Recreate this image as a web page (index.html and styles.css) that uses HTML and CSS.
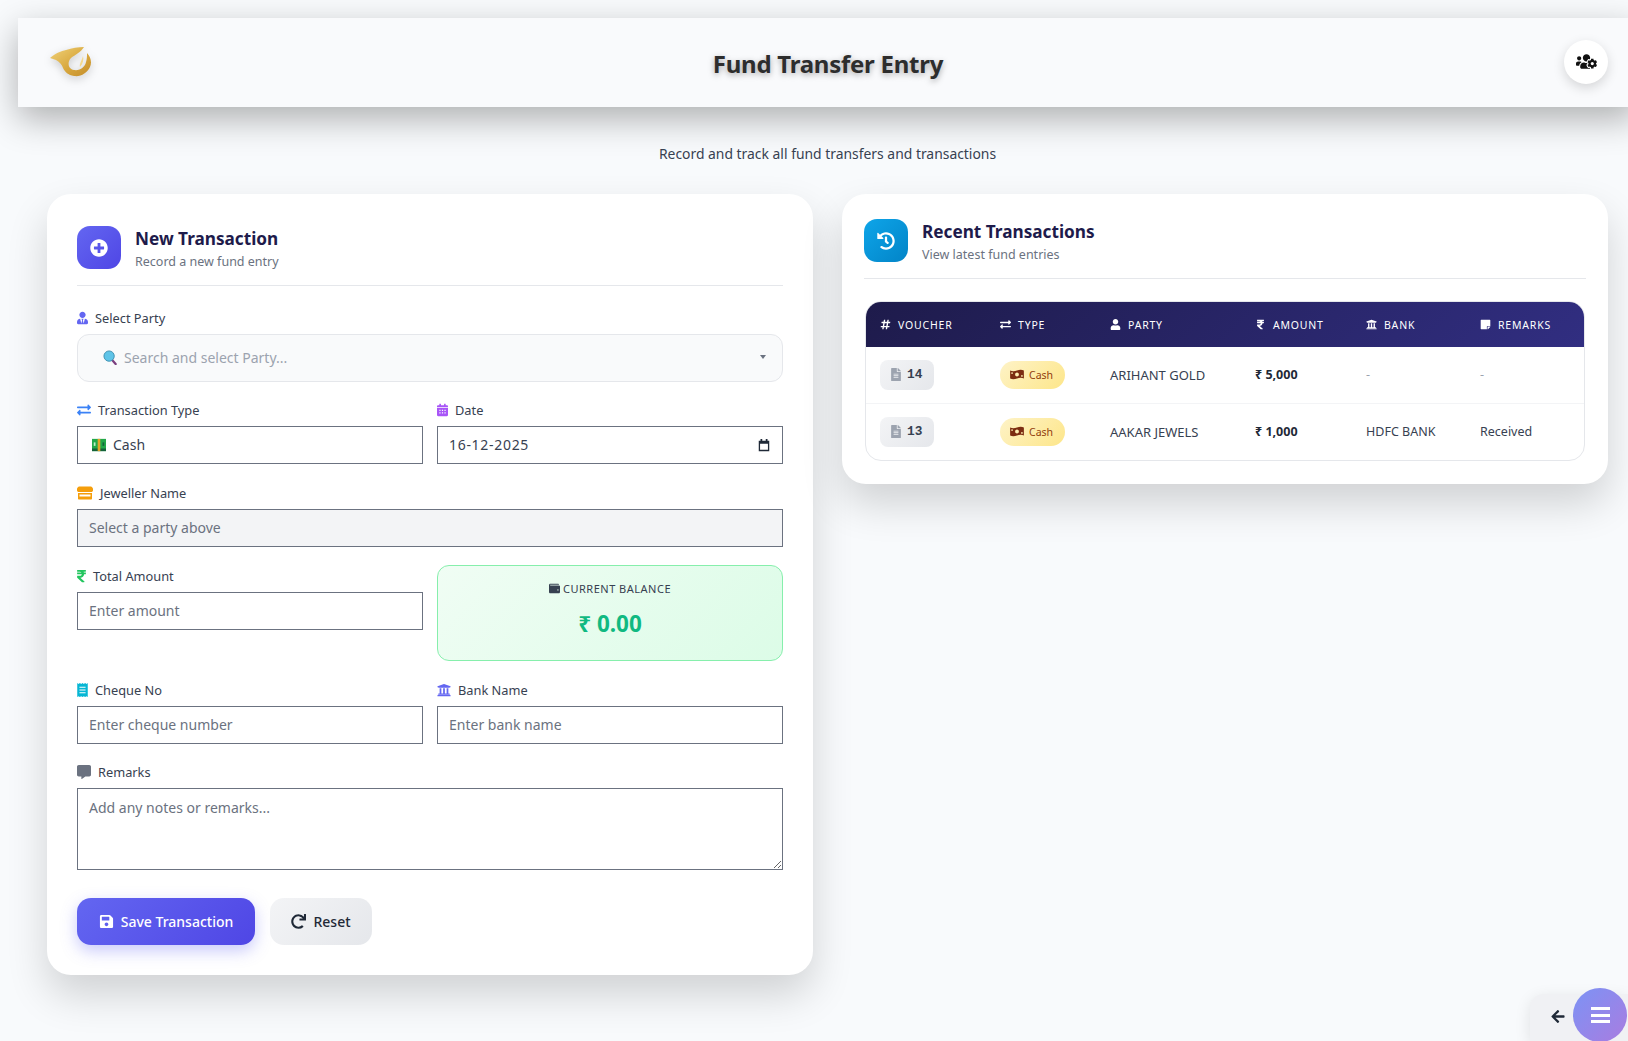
FILE: index.html
```html
<!DOCTYPE html>
<html lang="en">
<head>
    <meta charset="UTF-8">
    <meta name="viewport" content="width=device-width, initial-scale=1.0">
    <title>Fund Transfer Entry</title>
    <link rel="stylesheet" href="styles.css">
</head>
<body>
    <!-- icon sprite -->
    <svg class="sprite" xmlns="http://www.w3.org/2000/svg">
        <symbol id="i-plus" viewBox="0 0 512 512"><path d="M256 8C119 8 8 119 8 256s111 248 248 248 248-111 248-248S393 8 256 8zm144 276c0 6.6-5.4 12-12 12h-92v92c0 6.6-5.4 12-12 12h-56c-6.6 0-12-5.4-12-12v-92h-92c-6.6 0-12-5.4-12-12v-56c0-6.6 5.4-12 12-12h92v-92c0-6.6 5.4-12 12-12h56c6.6 0 12 5.4 12 12v92h92c6.6 0 12 5.4 12 12v56z"/></symbol>
        <symbol id="i-history" viewBox="0 0 512 512"><path d="M504 255.531c.253 136.64-111.18 248.372-247.82 248.468-59.015.042-113.223-20.53-155.822-54.911-11.077-8.94-11.905-25.541-1.839-35.607l11.267-11.267c8.609-8.609 22.353-9.551 31.891-1.984C173.062 425.135 212.781 440 256 440c101.705 0 184-82.311 184-184 0-101.705-82.311-184-184-184-48.814 0-93.149 18.969-126.068 49.932l50.754 50.754c10.08 10.08 2.941 27.314-11.313 27.314H24c-8.837 0-16-7.163-16-16V38.627c0-14.254 17.234-21.393 27.314-11.314l49.372 49.372C129.209 34.136 189.552 8 256 8c136.81 0 247.747 110.78 248 247.531zm-180.912 78.784l9.823-12.63c8.138-10.463 6.253-25.542-4.21-33.679L288 256.349V152c0-13.255-10.745-24-24-24h-16c-13.255 0-24 10.745-24 24v135.651l65.409 50.874c10.463 8.137 25.541 6.253 33.679-4.21z"/></symbol>
        <symbol id="i-hash" viewBox="0 0 448 512"><path d="M440.667 182.109l7.143-40c1.313-7.355-4.342-14.109-11.813-14.109h-74.81l14.623-81.891C377.123 38.754 371.468 32 363.997 32h-40.632a12 12 0 0 0-11.813 9.891L296.175 128H197.54l14.623-81.891C213.477 38.754 207.822 32 200.35 32h-40.632a12 12 0 0 0-11.813 9.891L132.528 128H53.432a12 12 0 0 0-11.813 9.891l-7.143 40C33.163 185.246 38.818 192 46.289 192h74.81L98.242 320H19.146a12 12 0 0 0-11.813 9.891l-7.143 40C-1.123 377.246 4.532 384 12.003 384h74.81L72.19 465.891C70.877 473.246 76.532 480 84.003 480h40.632a12 12 0 0 0 11.813-9.891L151.826 384h98.634l-14.623 81.891C234.523 473.246 240.178 480 247.65 480h40.632a12 12 0 0 0 11.813-9.891L315.472 384h79.096a12 12 0 0 0 11.813-9.891l7.143-40c1.313-7.355-4.342-14.109-11.813-14.109h-74.81l22.857-128h79.096a12 12 0 0 0 11.813-9.891zM261.889 320h-98.634l22.857-128h98.634l-22.857 128z"/></symbol>
        <symbol id="i-exchange" viewBox="0 0 512 512"><path d="M0 168v-16c0-13.255 10.745-24 24-24h360V80c0-21.367 25.899-32.042 40.971-16.971l80 80c9.372 9.373 9.372 24.569 0 33.941l-80 80C409.956 271.982 384 261.456 384 240v-48H24c-13.255 0-24-10.745-24-24zm488 152H128v-48c0-21.314-25.862-32.08-40.971-16.971l-80 80c-9.372 9.373-9.372 24.569 0 33.941l80 80C102.057 463.997 128 453.437 128 432v-48h360c13.255 0 24-10.745 24-24v-16c0-13.255-10.745-24-24-24z"/></symbol>
        <symbol id="i-user" viewBox="0 0 448 512"><path d="M224 256c70.7 0 128-57.3 128-128S294.7 0 224 0 96 57.3 96 128s57.3 128 128 128zm89.6 32h-16.7c-22.2 10.2-46.9 16-72.9 16s-50.6-5.8-72.9-16h-16.7C60.2 288 0 348.2 0 422.4V464c0 26.5 21.5 48 48 48h352c26.5 0 48-21.5 48-48v-41.6c0-74.2-60.2-134.4-134.4-134.4z"/></symbol>
        <symbol id="i-user-tie" viewBox="0 0 448 512"><path d="M224 256c70.700 0 128-57.300 128-128S294.700 0 224 0 96 57.300 96 128s57.300 128 128 128zm95.800 32.600L272 480l-32-136 32-56h-96l32 56-32 136-47.800-191.400C56.900 292 0 350.300 0 422.400V464c0 26.500 21.500 48 48 48h352c26.500 0 48-21.500 48-48v-41.600c0-72.100-56.900-130.400-128.200-133.800z"/></symbol>
        <symbol id="i-rupee" viewBox="0 0 320 512"><path d="M308 96c6.627 0 12-5.373 12-12V44c0-6.627-5.373-12-12-12H12C5.373 32 0 37.373 0 44v44.748c0 6.627 5.373 12 12 12h85.28c27.308 0 48.261 9.958 60.97 27.252H12c-6.627 0-12 5.373-12 12v40c0 6.627 5.373 12 12 12h158.757c-6.217 36.086-32.961 58.632-74.757 58.632H12c-6.627 0-12 5.373-12 12v53.012c0 3.349 1.4 6.546 3.861 8.818l165.052 152.356a12.001 12.001 0 0 0 8.139 3.182h82.562c10.924 0 16.166-13.408 8.139-20.818L116.871 319.906c76.499-2.34 131.144-53.395 138.318-127.906H308c6.627 0 12-5.373 12-12v-40c0-6.627-5.373-12-12-12h-58.69c-3.486-11.541-8.28-22.246-14.252-32H308z"/></symbol>
        <symbol id="i-bank" viewBox="0 0 512 512"><path d="M496 128v16a8 8 0 0 1-8 8h-24v12c0 6.627-5.373 12-12 12H60c-6.627 0-12-5.373-12-12v-12H24a8 8 0 0 1-8-8v-16a8 8 0 0 1 4.941-7.392l232-88a7.996 7.996 0 0 1 6.118 0l232 88A8 8 0 0 1 496 128zm-24 304H40c-13.255 0-24 10.745-24 24v16a8 8 0 0 0 8 8h464a8 8 0 0 0 8-8v-16c0-13.255-10.745-24-24-24zM96 192v192H60c-6.627 0-12 5.373-12 12v20h416v-20c0-6.627-5.373-12-12-12h-36V192h-64v192h-64V192h-64v192h-64V192H96z"/></symbol>
        <symbol id="i-note" viewBox="0 0 448 512"><path d="M312 320h136V56c0-13.300-10.700-24-24-24H24C10.700 32 0 42.700 0 56v400c0 13.300 10.700 24 24 24h264V344c0-13.200 10.800-24 24-24zm129 55l-98 98c-4.500 4.500-10.600 7-17 7h-6V352h128v6.100c0 6.300-2.500 12.400-7 16.900z"/></symbol>
        <symbol id="i-file" viewBox="0 0 384 512"><path d="M224 136V0H24C10.700 0 0 10.700 0 24v464c0 13.300 10.700 24 24 24h336c13.300 0 24-10.700 24-24V160H248c-13.200 0-24-10.800-24-24zm64 236c0 6.600-5.400 12-12 12H108c-6.600 0-12-5.400-12-12v-8c0-6.600 5.400-12 12-12h168c6.600 0 12 5.400 12 12v8zm0-64c0 6.600-5.400 12-12 12H108c-6.600 0-12-5.400-12-12v-8c0-6.600 5.400-12 12-12h168c6.600 0 12 5.400 12 12v8zm0-72v8c0 6.600-5.400 12-12 12H108c-6.600 0-12-5.400-12-12v-8c0-6.600 5.400-12 12-12h168c6.600 0 12 5.400 12 12zm96-114.100v6.100H256V0h6.100c6.400 0 12.500 2.500 17 7l97.900 98c4.500 4.500 7 10.600 7 16.900z"/></symbol>
        <symbol id="i-save" viewBox="0 0 448 512"><path d="M433.941 129.941l-83.882-83.882A48 48 0 0 0 316.118 32H48C21.490 32 0 53.490 0 80v352c0 26.510 21.490 48 48 48h352c26.510 0 48-21.490 48-48V163.882a48 48 0 0 0-14.059-33.941zM224 416c-35.346 0-64-28.654-64-64 0-35.346 28.654-64 64-64s64 28.654 64 64c0 35.346-28.654 64-64 64zm96-304.520V212c0 6.627-5.373 12-12 12H76c-6.627 0-12-5.373-12-12V108c0-6.627 5.373-12 12-12h228.520c3.183 0 6.235 1.264 8.485 3.515l3.480 3.480A11.996 11.996 0 0 1 320 111.480z"/></symbol>
        <symbol id="i-redo" viewBox="0 0 512 512"><path d="M500.330 0h-47.410a12 12 0 0 0-12 12.570l4 82.760A247.420 247.420 0 0 0 256 8C119.340 8 7.900 119.530 8 256.190 8.100 393.070 119.100 504 256 504a247.100 247.100 0 0 0 166.180-63.910 12 12 0 0 0 .48-17.430l-34-34a12 12 0 0 0-16.380-.55A176 176 0 1 1 402.100 157.800l-101.530-4.870a12 12 0 0 0-12.570 12v47.410a12 12 0 0 0 12 12h200.330a12 12 0 0 0 12-12V12a12 12 0 0 0-12-12z"/></symbol>
        <symbol id="i-arrow" viewBox="0 0 448 512"><path d="M257.500 445.100l-22.200 22.200c-9.400 9.400-24.600 9.400-33.900 0L7 273c-9.400-9.400-9.400-24.600 0-33.900L201.400 44.700c9.400-9.400 24.600-9.400 33.900 0l22.200 22.200c9.500 9.500 9.300 25-.4 34.300L136.600 216H424c13.300 0 24 10.700 24 24v32c0 13.300-10.700 24-24 24H136.600l120.500 114.800c9.800 9.300 10 24.800.4 34.300z"/></symbol>
        <symbol id="i-comment" viewBox="0 0 512 512"><path d="M448 0H64C28.700 0 0 28.700 0 64v288c0 35.300 28.700 64 64 64h96v84c0 9.800 11.200 15.500 19.100 9.700L304 416h144c35.300 0 64-28.700 64-64V64c0-35.300-28.700-64-64-64z"/></symbol>
        <symbol id="i-calendar" viewBox="0 0 448 512"><path d="M0 176h448v288c0 26.500-21.500 48-48 48H48c-26.500 0-48-21.500-48-48zm96 72v48h48v-48zm104 0v48h48v-48zm104 0v48h48v-48zM96 352v48h48v-48zm104 0v48h48v-48zm104 0v48h48v-48zM48 64h48V16c0-8.800 7.200-16 16-16h32c8.800 0 16 7.200 16 16v48h128V16c0-8.800 7.200-16 16-16h32c8.800 0 16 7.200 16 16v48h48c26.500 0 48 21.500 48 48v32H0v-32c0-26.500 21.500-48 48-48z"/></symbol>
        <symbol id="i-store" viewBox="0 0 512 416"><path d="M80 0h352c28 0 56 18 72 50l8 26v42c0 32-26 58-58 58H58c-32 0-58-26-58-58V76l8-26C24 18 52 0 80 0zM32 208h448v176c0 18-14 32-32 32H64c-18 0-32-14-32-32zm48 48v64h352v-64z"/></symbol>
        <symbol id="i-receipt" viewBox="0 0 384 512"><path d="M0 0l48 32L96 0l48 32 48-32 48 32 48-32 48 32 48-32v512l-48-32-48 32-48-32-48 32-48-32-48 32-48-32-48 32zm80 136v40h224v-40zm0 100v40h224v-40zm0 100v40h224v-40z"/></symbol>
        <symbol id="i-wallet" viewBox="0 0 512 512"><path d="M64 32h368c18 0 32 14 32 32v16H64c-9 0-16 7-16 16s7 16 16 16h384c35 0 64 14 64 48v256c0 35-29 64-64 64H64c-35 0-64-29-64-64V96c0-35 29-64 64-64zm352 256c-18 0-32 14-32 32s14 32 32 32 32-14 32-32-14-32-32-32z"/></symbol>
        <symbol id="i-money" viewBox="0 0 640 512"><path fill-rule="evenodd" d="M0 70C100 120 210 110 320 70S540 20 640 70V442C540 392 430 402 320 442S100 492 0 442zM320 166a90 90 0 1 0 0 180 90 90 0 0 0 0-180zM90 150a40 40 0 1 0 0 80 40 40 0 0 0 0-80zM550 282a40 40 0 1 0 0 80 40 40 0 0 0 0-80z"/></symbol>
        <symbol id="i-users-cog" viewBox="0 0 640 512"><path d="M610.5 341.3c2.6-14.1 2.6-28.5 0-42.6l25.8-14.9c3-1.7 4.3-5.2 3.3-8.5-6.7-21.6-18.2-41.2-33.2-57.4-2.3-2.5-6-3.1-9-1.4l-25.8 14.9c-10.9-9.3-23.4-16.5-36.9-21.3v-29.8c0-3.4-2.4-6.4-5.7-7.1-22.3-5-45-4.8-66.2 0-3.3.7-5.7 3.7-5.7 7.1v29.8c-13.5 4.8-26 12-36.9 21.3l-25.8-14.9c-2.9-1.7-6.7-1.1-9 1.4-15 16.2-26.5 35.8-33.2 57.4-1 3.3.4 6.8 3.3 8.5l25.8 14.9c-2.6 14.1-2.6 28.5 0 42.6l-25.8 14.9c-3 1.7-4.3 5.2-3.3 8.5 6.7 21.6 18.2 41.1 33.2 57.4 2.3 2.5 6 3.1 9 1.4l25.8-14.9c10.9 9.3 23.4 16.5 36.9 21.3v29.8c0 3.4 2.4 6.4 5.7 7.1 22.3 5 45 4.8 66.2 0 3.3-.7 5.7-3.7 5.7-7.1v-29.8c13.5-4.8 26-12 36.9-21.3l25.8 14.9c2.9 1.7 6.7 1.1 9-1.4 15-16.2 26.5-35.8 33.2-57.4 1-3.3-.4-6.8-3.3-8.5l-25.8-14.9zM496 368.5c-26.8 0-48.5-21.8-48.5-48.5s21.8-48.5 48.5-48.5 48.5 21.8 48.5 48.5-21.7 48.5-48.5 48.5zM96 224c35.3 0 64-28.7 64-64s-28.7-64-64-64-64 28.7-64 64 28.7 64 64 64zm224 32c1.9 0 3.7-.5 5.6-.6 8.3-21.7 20.5-42.1 36.3-59.2 7.4-8 17.9-12.6 28.9-12.6 6.9 0 13.7 1.8 19.6 5.3l7.9 4.6c.8-.5 1.6-.9 2.4-1.4 7-14.6 11.2-30.8 11.2-48 0-61.9-50.1-112-112-112S208 82.100 208 144c0 61.900 50.100 112 112 112zm105.200 194.500c-2.300-1.200-4.600-2.600-6.800-3.900-8.200 4.800-15.300 9.800-27.500 9.800-10.900 0-21.400-4.600-28.900-12.600-18.300-19.800-32.300-43.900-40.200-69.600-10.700-34.500 24.900-49.700 25.800-50.300-.1-2.600-.1-5.200 0-7.800l-7.900-4.600c-3.800-2.200-7-5-9.800-8.100-3.300.2-6.500.6-9.800.6-24.600 0-47.600-6-68.500-16h-8.300C179.600 288 128 339.600 128 403.200V432c0 26.500 21.500 48 48 48h255.400c-3.700-6-6.200-12.800-6.200-20.300v-9.200zM173.100 274.600C161.500 263.100 145.600 256 128 256H64c-35.300 0-64 28.700-64 64v32c0 17.700 14.300 32 32 32h65.900c6.300-47.400 34.900-87.300 75.200-109.400z"/></symbol>
    </svg>

    <header class="top-bar">
        <svg class="logo" viewBox="0 0 42 34" xmlns="http://www.w3.org/2000/svg">
            <defs>
                <linearGradient id="goldGrad" x1="0" y1="0" x2="1" y2="1">
                    <stop offset="0" stop-color="#f0d27a"/>
                    <stop offset="0.55" stop-color="#d9a93f"/>
                    <stop offset="1" stop-color="#c48d2a"/>
                </linearGradient>
            </defs>
            <path fill="url(#goldGrad)" d="M0 13 C6 8 11 6 16 5 C22 3 28 2 34 2 C31 7 25 10 21 13 C17 17 18 24 24 25 C30 26 35 22 36 17 C37 14 37 11 37 8 C41 12 42 18 40 22 C37 28 31 32 24 31 C18 30 15 27 13 23 C12 20 10 17 6 15 C4 14 2 14 0 13 Z"/>
            <path fill="#f3d98e" d="M33 11 C34 14 33 19 30 22 C29 19 32 15 33 11 Z"/>
        </svg>
        <h1 class="page-title">Fund Transfer Entry</h1>
        <button class="profile-btn" type="button" aria-label="Users">
            <svg class="ic"><use href="#i-users-cog"/></svg>
        </button>
    </header>

    <p class="page-sub">Record and track all fund transfers and transactions</p>

    <main class="columns">
        <section class="card form-card">
            <div class="card-head">
                <div class="head-icon violet"><svg class="ic"><use href="#i-plus"/></svg></div>
                <div class="head-text">
                    <h2>New Transaction</h2>
                    <p>Record a new fund entry</p>
                </div>
            </div>

            <form class="form-stack">
                <div class="field">
                    <label class="lbl"><svg class="ic c-indigo w-11"><use href="#i-user-tie"/></svg>Select Party</label>
                    <div class="party-select">
                        <svg class="emoji-search" viewBox="0 0 16 16" xmlns="http://www.w3.org/2000/svg">
                            <path d="M9.500 10.500 L13.500 15" stroke="#7b3f7f" stroke-width="2.400" stroke-linecap="round"/>
                            <circle cx="6.500" cy="6.500" r="5.500" fill="#5fc4e8" stroke="#3d8fb0" stroke-width="1"/>
                        </svg>
                        <span class="party-ph">Search and select Party...</span>
                        <span class="caret"></span>
                    </div>
                </div>

                <div class="two-col">
                    <div class="field">
                        <label class="lbl"><svg class="ic c-blue w-14"><use href="#i-exchange"/></svg>Transaction Type</label>
                        <div class="ctrl">
                            <svg class="emoji-cash" viewBox="0 0 16 16" xmlns="http://www.w3.org/2000/svg">
                                <rect y="1" width="16" height="14" fill="#22a84a"/>
                                <rect y="12" width="16" height="3" fill="#14633a"/>
                                <rect x="6.500" y="1" width="3" height="14" fill="#e3a52a"/>
                                <rect x="2" y="5" width="2" height="4" fill="#bff0c8"/>
                                <rect x="12" y="5" width="2" height="4" fill="#14633a"/>
                            </svg>
                            <span>Cash</span>
                        </div>
                    </div>
                    <div class="field">
                        <label class="lbl"><svg class="ic c-purple w-11"><use href="#i-calendar"/></svg>Date</label>
                        <div class="ctrl date-ctrl">
                            <span class="date-val">16-12-2025</span>
                            <svg class="date-ic" viewBox="0 0 16 16" xmlns="http://www.w3.org/2000/svg">
                                <path d="M4 1h2v2h4V1h2v2h2v12H2V3h2zM3.500 6.500v7h9v-7z"/>
                            </svg>
                        </div>
                    </div>
                </div>

                <div class="field">
                    <label class="lbl"><svg class="ic c-amber w-16"><use href="#i-store"/></svg>Jeweller Name</label>
                    <input class="inp inp-off" type="text" placeholder="Select a party above" readonly>
                </div>

                <div class="two-col">
                    <div class="field amount-field">
                        <label class="lbl"><svg class="ic c-green w-9"><use href="#i-rupee"/></svg>Total Amount</label>
                        <input class="inp" type="text" placeholder="Enter amount">
                    </div>
                    <div class="balance-box">
                        <div class="bal-label"><svg class="ic"><use href="#i-wallet"/></svg>CURRENT BALANCE</div>
                        <div class="bal-value">₹ 0.00</div>
                    </div>
                </div>

                <div class="two-col">
                    <div class="field">
                        <label class="lbl"><svg class="ic c-cyan w-11"><use href="#i-receipt"/></svg>Cheque No</label>
                        <input class="inp" type="text" placeholder="Enter cheque number">
                    </div>
                    <div class="field">
                        <label class="lbl"><svg class="ic c-indigo w-14"><use href="#i-bank"/></svg>Bank Name</label>
                        <input class="inp" type="text" placeholder="Enter bank name">
                    </div>
                </div>

                <div class="field">
                    <label class="lbl"><svg class="ic c-gray w-14"><use href="#i-comment"/></svg>Remarks</label>
                    <textarea class="inp remarks" placeholder="Add any notes or remarks..."></textarea>
                </div>

                <div class="btn-row">
                    <button class="btn btn-save" type="button"><svg class="ic"><use href="#i-save"/></svg>Save Transaction</button>
                    <button class="btn btn-reset" type="button"><svg class="ic"><use href="#i-redo"/></svg>Reset</button>
                </div>
            </form>
        </section>

        <section class="card list-card">
            <div class="card-head">
                <div class="head-icon sky"><svg class="ic"><use href="#i-history"/></svg></div>
                <div class="head-text">
                    <h2>Recent Transactions</h2>
                    <p>View latest fund entries</p>
                </div>
            </div>

            <div class="table-wrap">
                <table class="tx-table">
                    <colgroup>
                        <col class="col-voucher">
                        <col class="col-type">
                        <col class="col-party">
                        <col class="col-amount">
                        <col class="col-bank">
                        <col class="col-remarks">
                    </colgroup>
                    <thead>
                        <tr>
                            <th><svg class="ic"><use href="#i-hash"/></svg>VOUCHER</th>
                            <th><svg class="ic"><use href="#i-exchange"/></svg>TYPE</th>
                            <th><svg class="ic"><use href="#i-user"/></svg>PARTY</th>
                            <th><svg class="ic"><use href="#i-rupee"/></svg>AMOUNT</th>
                            <th><svg class="ic"><use href="#i-bank"/></svg>BANK</th>
                            <th><svg class="ic"><use href="#i-note"/></svg>REMARKS</th>
                        </tr>
                    </thead>
                    <tbody>
                        <tr>
                            <td><span class="voucher"><svg class="ic"><use href="#i-file"/></svg>14</span></td>
                            <td><span class="type-pill"><svg class="ic"><use href="#i-money"/></svg>Cash</span></td>
                            <td class="party">ARIHANT GOLD</td>
                            <td class="amount">₹ 5,000</td>
                            <td class="muted">-</td>
                            <td class="muted">-</td>
                        </tr>
                        <tr>
                            <td><span class="voucher"><svg class="ic"><use href="#i-file"/></svg>13</span></td>
                            <td><span class="type-pill"><svg class="ic"><use href="#i-money"/></svg>Cash</span></td>
                            <td class="party">AAKAR JEWELS</td>
                            <td class="amount">₹ 1,000</td>
                            <td>HDFC BANK</td>
                            <td>Received</td>
                        </tr>
                    </tbody>
                </table>
            </div>
        </section>
    </main>

    <div class="back-tab"><svg class="ic"><use href="#i-arrow"/></svg><span>Back</span></div>
    <button class="fab" type="button" aria-label="Menu"><span></span><span></span><span></span></button>
</body>
</html>
```

FILE: styles.css
```css
* {
    box-sizing: border-box;
}

html, body {
    height: 1041px;
    overflow: hidden;
}

body {
    margin: 0;
    padding: 18px 0 0 18px;
    width: 1628px;
    position: relative;
    font-family: "Noto Sans", "Open Sans", sans-serif;
    background-color: #f8fafc;
    color: #1f2937;
}

.sprite {
    display: none;
}

.ic {
    fill: currentColor;
    flex: none;
}

/* top bar */
.top-bar {
    width: 1619px;
    height: 89px;
    padding: 0 29px 0 32px;
    display: flex;
    align-items: center;
    justify-content: space-between;
    background-color: #f9fafc;
    box-shadow: 0 12px 35px rgba(0, 0, 0, 0.3);
}

.logo {
    width: 42px;
    height: 34px;
    margin-bottom: 2px;
    filter: drop-shadow(0 3px 4px rgba(0, 0, 0, 0.18));
}

.page-title {
    margin: 2px 0 0;
    font-size: 24px;
    font-weight: 700;
    letter-spacing: -0.25px;
    color: #2d2d2d;
    text-shadow: 0 2px 6px rgba(0, 0, 0, 0.35);
}

.profile-btn {
    width: 44px;
    height: 44px;
    margin-top: -2px;
    padding: 0;
    border: none;
    border-radius: 50%;
    display: flex;
    align-items: center;
    justify-content: center;
    background-color: #ffffff;
    color: #111111;
    box-shadow: 0 4px 12px rgba(0, 0, 0, 0.15);
}

.profile-btn .ic {
    width: 21px;
    height: 17px;
}

.page-sub {
    width: 1619px;
    margin: 37px 0 0 0;
    height: 20px;
    line-height: 20px;
    text-align: center;
    font-size: 13.9px;
    color: #374151;
}

/* layout */
.columns {
    display: grid;
    grid-template-columns: 766px 766px;
    gap: 29px;
    align-items: start;
    margin: 30px 0 0 29px;
}

.card {
    background-color: #ffffff;
    border-radius: 24px;
    box-shadow: 0 20px 40px rgba(0, 0, 0, 0.16);
}

.form-card {
    padding: 32px 30px 30px;
    height: 781px;
}

.list-card {
    padding: 25px 22px 24px;
    height: 290px;
}

.card-head {
    display: flex;
    align-items: flex-start;
    gap: 14px;
    height: 60px;
    border-bottom: 1px solid #e5e7eb;
}

.head-icon {
    width: 44px;
    height: 43px;
    border-radius: 13px;
    display: flex;
    align-items: center;
    justify-content: center;
    color: #ffffff;
}

.head-icon .ic {
    width: 18px;
    height: 18px;
}

.violet {
    background: linear-gradient(135deg, #6366f1, #4f46e5);
}

.sky {
    background: linear-gradient(135deg, #0ea5e9, #0284c7);
}

.head-text {
    padding-top: 1px;
}

.head-text h2 {
    margin: 0;
    font-size: 17.2px;
    line-height: 24px;
    font-weight: 700;
    color: #1e1b4b;
}

.head-text p {
    margin: 1px 0 0;
    font-size: 12.5px;
    line-height: 20px;
    color: #6b7280;
}

/* form */
.form-stack {
    margin-top: 22px;
    display: flex;
    flex-direction: column;
    gap: 18.4px;
}

.two-col {
    display: grid;
    grid-template-columns: 346px 346px;
    gap: 14px;
}

.amount-field {
    padding-top: 0.5px;
}

.lbl {
    display: flex;
    align-items: center;
    gap: 7px;
    height: 20px;
    margin-bottom: 6px;
    font-size: 12.8px;
    color: #374151;
}

.lbl .ic {
    height: 14px;
}

.w-9 { width: 9px; }
.w-11 { width: 11px; }
.w-14 { width: 14px; }
.w-16 { width: 16px; }

.c-indigo { color: #6366f1; }
.c-blue { color: #3b82f6; }
.c-purple { color: #a855f7; }
.c-amber { color: #f59e0b; }
.c-green { color: #22c55e; }
.c-cyan { color: #06b6d4; }
.c-gray { color: #6b7280; }

.party-select {
    height: 48px;
    padding: 0 16px 2px 25px;
    display: flex;
    align-items: center;
    border: 1px solid #e5e7eb;
    border-radius: 12px;
    background-color: #f9fafb;
    font-size: 14px;
    color: #9ca3af;
}

.emoji-search {
    width: 15px;
    height: 15px;
    margin-right: 6px;
}

.party-ph {
    flex: 1;
}

.caret {
    width: 0;
    height: 0;
    border-left: 3px solid transparent;
    border-right: 3px solid transparent;
    border-top: 4px solid #6b7280;
}

.inp,
.ctrl {
    display: block;
    width: 100%;
    height: 38px;
    padding: 0 11px;
    border: 1px solid #6b7280;
    border-radius: 0;
    background-color: #ffffff;
    font-family: inherit;
    font-size: 14px;
    color: #374151;
    outline: none;
}

.inp::placeholder {
    color: #6b7280;
    opacity: 1;
}

.inp-off {
    background-color: #f3f4f6;
}

.remarks {
    height: 82px;
    padding: 9px 11px;
    line-height: 20px;
    resize: vertical;
}

.ctrl {
    display: flex;
    align-items: center;
    padding-bottom: 1px;
}

.emoji-cash {
    width: 14px;
    height: 14px;
    margin: 0 7px 0 3px;
}

.date-ctrl {
    justify-content: space-between;
}

.date-val {
    letter-spacing: 0.7px;
}

.date-ic {
    width: 14px;
    height: 14px;
    fill: #1f2937;
}

.balance-box {
    height: 96px;
    padding-top: 14px;
    border: 1px solid #86efac;
    border-radius: 12px;
    background: linear-gradient(135deg, #f0fdf4, #dcfce7);
    text-align: center;
}

.bal-label {
    display: flex;
    align-items: center;
    justify-content: center;
    gap: 3px;
    height: 16px;
    font-size: 11px;
    letter-spacing: 0.5px;
    color: #374151;
}

.bal-label .ic {
    width: 11px;
    height: 11px;
}

.bal-value {
    margin-top: 13px;
    font-size: 22.5px;
    line-height: 30px;
    font-weight: 700;
    color: #10b981;
}

.btn-row {
    display: flex;
    gap: 15px;
    margin-top: 9.6px;
}

.btn {
    height: 47px;
    border: none;
    border-radius: 14px;
    display: flex;
    align-items: center;
    justify-content: center;
    gap: 7px;
    font-family: inherit;
    font-size: 14px;
    font-weight: 500;
}

.btn .ic {
    width: 15px;
    height: 15px;
}

.btn-save {
    width: 178px;
    background: linear-gradient(135deg, #6366f1, #4f46e5);
    color: #ffffff;
    box-shadow: 0 6px 16px rgba(99, 102, 241, 0.35);
}

.btn-reset {
    width: 102px;
    background: linear-gradient(135deg, #f3f4f6, #e5e7eb);
    color: #1f2937;
}

/* table */
.table-wrap {
    margin: 22px 1px 0;
    border: 1px solid #e5e7eb;
    border-radius: 16px;
    overflow: hidden;
}

.tx-table {
    width: 100%;
    border-collapse: collapse;
    table-layout: fixed;
}

.col-voucher { width: 120px; }
.col-type { width: 110px; }
.col-party { width: 145px; }
.col-amount { width: 111px; }
.col-bank { width: 114px; }

.tx-table thead tr {
    background: linear-gradient(135deg, #1e1b4b, #312e81);
}

.tx-table th {
    height: 45px;
    padding: 0 14px;
    text-align: left;
    font-size: 10.5px;
    font-weight: 400;
    letter-spacing: 0.8px;
    color: #ffffff;
}

.tx-table th .ic {
    width: 11px;
    height: 11px;
    margin-right: 7px;
    vertical-align: -1px;
}

.tx-table td {
    height: 56px;
    padding: 0 14px;
    font-size: 12.5px;
    color: #374151;
}

.tx-table tbody tr + tr td {
    height: 57px;
    border-top: 1px solid #f3f4f6;
}

.voucher {
    display: inline-flex;
    align-items: center;
    gap: 6px;
    width: 54px;
    height: 30px;
    padding-left: 11px;
    border-radius: 8px;
    background: linear-gradient(135deg, #f3f4f6, #e5e7eb);
    font-family: "Liberation Mono", monospace;
    font-size: 12.8px;
    font-weight: 700;
    color: #374151;
}

.voucher .ic {
    width: 10px;
    height: 13px;
    color: #9ca3af;
}

.type-pill {
    display: inline-flex;
    align-items: center;
    gap: 5px;
    width: 65px;
    height: 28px;
    padding-left: 10px;
    border-radius: 14px;
    background: linear-gradient(135deg, #fef3c7, #fde68a);
    font-size: 10.5px;
    color: #92400e;
}

.type-pill .ic {
    width: 14px;
    height: 11px;
    color: #7c2d12;
}

.tx-table td.party {
    font-size: 13px;
}

.tx-table td.amount {
    font-weight: 700;
    color: #1f2937;
}

.tx-table td.muted {
    color: #9ca3af;
}

/* corner buttons */
.back-tab {
    position: absolute;
    left: 1530px;
    top: 994px;
    width: 98px;
    height: 47px;
    padding: 0 0 3px 21px;
    display: flex;
    align-items: center;
    gap: 8px;
    border-radius: 14px 0 0 0;
    background-color: #f0f1f4;
    color: #1f2937;
    font-size: 14px;
    font-weight: 600;
    box-shadow: 0 4px 16px rgba(0, 0, 0, 0.1);
}

.back-tab .ic {
    width: 14px;
    height: 15px;
}

.fab {
    position: absolute;
    left: 1573px;
    top: 988px;
    width: 54px;
    height: 54px;
    padding: 0;
    border: none;
    border-radius: 50%;
    display: flex;
    flex-direction: column;
    align-items: center;
    justify-content: center;
    gap: 3.7px;
    background: linear-gradient(135deg, #7c93f5, #a97ce0);
}

.fab span {
    display: block;
    width: 19px;
    height: 3px;
    background-color: #ffffff;
}
```
